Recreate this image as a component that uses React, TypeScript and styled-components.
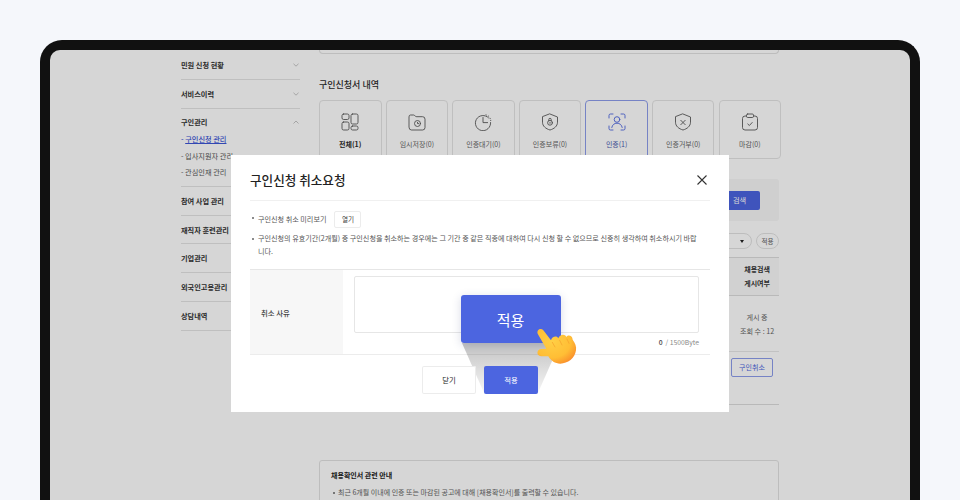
import styled, { createGlobalStyle } from "styled-components";
import type { ReactNode } from "react";

const GlobalStyle = createGlobalStyle`
  html, body {
    margin: 0;
    padding: 0;
    height: 500px;
    overflow: hidden;
    background: #f5f7fb;
    font-family: "Noto Sans CJK KR", "Noto Sans", sans-serif;
    color: #222;
  }
  * { box-sizing: border-box; }
`;

const Stage = styled.div`
  padding-top: 40px;
  height: 500px;
  overflow: hidden;
`;

const Device = styled.div`
  width: 880px;
  height: 480px;
  margin: 0 auto;
  border: 10px solid #111;
  border-bottom: 0;
  border-radius: 22px 22px 0 0;
  background: #111;
`;

const Screen = styled.div`
  position: relative;
  height: 470px;
  overflow: hidden;
  background: #fff;
  border-radius: 10px 10px 0 0;
`;

const Page = styled.div`
  width: 598px;
  margin: 0 auto;
  display: flex;
  gap: 19px;
  align-items: flex-start;
`;

const Sidebar = styled.nav`
  width: 119px;
  flex: none;
  padding-top: 1px;
`;

const MenuGroup = styled.div<{ $open?: boolean }>`
  border-bottom: 1px solid #e4e4e4;
  padding-bottom: ${(p) => (p.$open ? "5px" : "0")};
`;

const MenuTitle = styled.div`
  height: 27.8px;
  display: flex;
  align-items: center;
  justify-content: space-between;
  font-size: 7.2px;
  font-weight: 700;
  color: #333;
  padding-right: 1px;
`;

const SubList = styled.div`
  margin-top: -5px;
`;

const SubItem = styled.div<{ $active?: boolean }>`
  height: 16.5px;
  line-height: 16.5px;
  font-size: 7.2px;
  white-space: nowrap;
  color: ${(p) => (p.$active ? "#3c55d6" : "#555")};
  font-weight: ${(p) => (p.$active ? 500 : 400)};
  span {
    text-decoration: ${(p) => (p.$active ? "underline" : "none")};
  }
`;

const Main = styled.main`
  width: 460px;
  flex: none;
`;

const TopCard = styled.div`
  height: 4px;
  border: 1px solid #e2e2e2;
  border-top: 0;
  border-radius: 0 0 4px 4px;
`;

const SectionTitle = styled.h2`
  margin: 24px 0 8px;
  font-size: 9px;
  line-height: 14px;
  font-weight: 500;
  color: #2b2b2b;
`;

const TabGrid = styled.div`
  display: grid;
  grid-template-columns: repeat(7, 62.5px);
  gap: 4.1px;
`;

const Tab = styled.div<{ $active?: boolean }>`
  height: 59px;
  padding-top: 12px;
  display: flex;
  flex-direction: column;
  align-items: center;
  border: 1px solid ${(p) => (p.$active ? "#8d9ceb" : "#e4e4e4")};
  border-radius: 4px;
  color: ${(p) => (p.$active ? "#4c65e0" : "#5b5b5b")};
`;

const TabLabel = styled.div<{ $bold?: boolean; $active?: boolean }>`
  margin-top: 7px;
  font-size: 7px;
  line-height: 12px;
  font-weight: ${(p) => (p.$bold ? 700 : 400)};
  color: ${(p) => (p.$bold ? "#2b2b2b" : p.$active ? "#4a5bb0" : "#666")};
  white-space: nowrap;
`;

const SearchPanel = styled.div`
  margin-top: 20px;
  height: 42px;
  padding-right: 19px;
  display: flex;
  align-items: center;
  justify-content: flex-end;
  background: #f7f7f7;
  border-radius: 3px;
`;

const SearchButton = styled.div`
  width: 60px;
  height: 19px;
  padding-left: 33px;
  line-height: 19px;
  font-size: 7.2px;
  color: #fff;
  background: #4c65e0;
  border-radius: 2px;
`;

const FilterRow = styled.div`
  margin-top: 12px;
  height: 16px;
  display: flex;
  justify-content: flex-end;
  gap: 4px;
`;

const Pill = styled.div<{ $wide?: boolean }>`
  width: ${(p) => (p.$wide ? "60px" : "23px")};
  height: 16px;
  padding-right: ${(p) => (p.$wide ? "7px" : "0")};
  display: flex;
  align-items: center;
  justify-content: ${(p) => (p.$wide ? "flex-end" : "center")};
  border: 1px solid #e2e2e2;
  border-radius: 8px;
  font-size: 6.6px;
  color: #666;
`;

const Caret = styled.i`
  width: 0;
  height: 0;
  border-left: 2.5px solid transparent;
  border-right: 2.5px solid transparent;
  border-top: 3px solid #222;
`;

const TableHead = styled.div`
  margin-top: 8px;
  height: 39px;
  padding-right: 9px;
  display: flex;
  flex-direction: column;
  align-items: flex-end;
  justify-content: center;
  background: #fafafa;
  border-top: 1px solid #ddd;
  border-bottom: 1px solid #ddd;
  font-size: 7px;
  line-height: 13.4px;
  font-weight: 700;
  color: #333;
`;

const TableRow = styled.div`
  height: 56px;
  padding-top: 14px;
  border-bottom: 1px solid #e8e8e8;
`;

const CellLine = styled.div`
  width: 44px;
  margin-left: auto;
  font-size: 7.1px;
  line-height: 14px;
  text-align: center;
  white-space: nowrap;
  color: #666;
`;

const ActionRow = styled.div`
  height: 53px;
  padding: 6px 6px 0 0;
  display: flex;
  justify-content: flex-end;
  align-items: flex-start;
  border-bottom: 1px solid #ddd;
`;

const OutlineButton = styled.div`
  width: 42px;
  height: 19px;
  line-height: 17px;
  text-align: center;
  font-size: 7px;
  color: #4c65e0;
  border: 1px solid #8d9ceb;
  border-radius: 2px;
`;

const InfoBox = styled.div`
  margin-top: 55px;
  padding: 8px 11px 20px;
  border: 1px solid #e2e2e2;
  border-radius: 3px;
`;

const InfoTitle = styled.div`
  font-size: 7px;
  line-height: 13px;
  font-weight: 700;
  color: #222;
`;

const InfoLine = styled.div`
  margin-top: 4px;
  padding-left: 7px;
  font-size: 7px;
  line-height: 13px;
  color: #666;
  position: relative;
  &::before {
    content: "";
    position: absolute;
    left: 2px;
    top: 5.5px;
    width: 2px;
    height: 2px;
    border-radius: 50%;
    background: #666;
  }
`;

const Dim = styled.div`
  position: absolute;
  inset: 0;
  padding-top: 105px;
  display: flex;
  justify-content: center;
  align-items: flex-start;
  background: rgba(0, 0, 0, 0.16);
`;

const Modal = styled.section`
  position: relative;
  width: 498px;
  height: 257px;
  padding: 0 19px;
  background: #fff;
`;

const ModalHeader = styled.header`
  height: 46px;
  padding: 4px 2px 0 0;
  display: flex;
  align-items: center;
  justify-content: space-between;
  border-bottom: 1px solid #f0f0f0;
`;

const ModalTitle = styled.h1`
  margin: 0;
  font-size: 12.6px;
  font-weight: 500;
  color: #222;
`;

const NoteList = styled.ul`
  margin: 0;
  padding: 10px 0 0;
  height: 69px;
  list-style: none;
  border-bottom: 1px solid #e6e6e6;
`;

const NoteItem = styled.li`
  position: relative;
  padding: 0 12px 0 8px;
  font-size: 7.1px;
  line-height: 13px;
  color: #555;
  word-break: break-all;
  margin-bottom: 3px;
  &::before {
    content: "";
    position: absolute;
    left: 2px;
    top: 5.5px;
    width: 2px;
    height: 2px;
    border-radius: 50%;
    background: #666;
  }
`;

const PreviewRow = styled.div`
  display: flex;
  align-items: center;
  gap: 8px;
  height: 17px;
  margin-bottom: 4px;
`;

const SmallButton = styled.div`
  width: 27px;
  height: 17px;
  line-height: 15px;
  text-align: center;
  font-size: 6.6px;
  color: #444;
  border: 1px solid #ececec;
  border-radius: 2px;
`;

const FormRow = styled.div`
  height: 85px;
  display: flex;
  border-bottom: 1px solid #ececec;
`;

const FormLabel = styled.div`
  width: 93px;
  flex: none;
  padding-left: 11px;
  display: flex;
  align-items: center;
  background: #f7f7f7;
  font-size: 7.4px;
  font-weight: 500;
  color: #444;
`;

const FormField = styled.div`
  flex: 1;
  padding: 6px 11px 0;
`;

const ReasonInput = styled.textarea`
  display: block;
  width: 100%;
  height: 57px;
  resize: none;
  outline: none;
  border: 1px solid #e6e6e6;
  border-radius: 2px;
  background: #fff;
`;

const Counter = styled.div`
  margin-top: 4px;
  text-align: right;
  font-size: 6.8px;
  line-height: 10px;
  color: #888;
  b {
    color: #444;
    font-weight: 500;
    margin-right: 3px;
  }
`;

const ModalActions = styled.div`
  margin-top: 11px;
  display: flex;
  justify-content: center;
  gap: 8px;
`;

const ActionButton = styled.div<{ $primary?: boolean }>`
  position: relative;
  z-index: 1;
  width: 54px;
  height: 28px;
  line-height: 28px;
  text-align: center;
  font-size: 7.4px;
  border-radius: 2px;
  color: ${(p) => (p.$primary ? "#fff" : "#222")};
  background: ${(p) => (p.$primary ? "#4c65e0" : "#fff")};
  box-shadow: ${(p) => (p.$primary ? "none" : "inset 0 0 0 1px #ececec")};
`;

const Beam = styled.div`
  position: absolute;
  left: 231px;
  top: 188px;
  width: 98px;
  height: 51px;
  clip-path: polygon(0 0, 100% 0, 77% 100%, 23% 100%);
  background: linear-gradient(rgba(0, 0, 0, 0.24), rgba(0, 0, 0, 0.03));
`;

const BigButton = styled.div`
  position: absolute;
  left: 229.5px;
  top: 140px;
  width: 100px;
  height: 48px;
  display: flex;
  align-items: center;
  justify-content: center;
  font-size: 15px;
  color: #fff;
  background: #4c65e0;
  border-radius: 3px;
  box-shadow: 0 2px 10px rgba(40, 50, 110, 0.18);
`;

const HandWrap = styled.div`
  position: absolute;
  left: 294px;
  top: 160px;
  width: 65px;
  height: 60px;
`;

const CloseIcon = () => (
  <svg width="12" height="12" viewBox="0 0 12 12" fill="none" stroke="#333" strokeWidth="1.1">
    <path d="M1.5 1.5l9 9M10.5 1.5l-9 9" />
  </svg>
);

const Chevron = ({ up }: { up?: boolean }) => (
  <svg width="6" height="4" viewBox="0 0 6 4" fill="none" stroke="#b5b5b5" strokeWidth="0.8">
    <path d={up ? "M.5 3.5L3 1l2.5 2.5" : "M.5 .8L3 3.2 5.5 .8"} />
  </svg>
);

const TabIcon = ({ children }: { children: ReactNode }) => (
  <svg width="18" height="18" viewBox="0 0 18 18" fill="none" stroke="currentColor" strokeWidth="0.9" strokeLinecap="round" strokeLinejoin="round">
    {children}
  </svg>
);

const HandIcon = () => (
  <svg width="65" height="60" viewBox="0 0 195 180" fill="none">
    <defs>
      <radialGradient id="palm" cx="0.38" cy="0.35" r="0.8">
        <stop offset="0" stopColor="#ffcf45" />
        <stop offset="0.6" stopColor="#ffbe35" />
        <stop offset="0.86" stopColor="#fb962c" />
        <stop offset="1" stopColor="#f0713a" />
      </radialGradient>
    </defs>
    <path
      d="M38 56C34 44 48 38 55 46L78 76C80 64 96 60 100 70C104 58 120 56 124 66C130 58 142 62 143 74C150 84 155 94 153 106C150 130 128 146 106 146C90 146 78 138 70 124L48 124C34 122 34 104 48 102L64 101Z"
      fill="url(#palm)"
    />
    <path d="M82 82l8 14M104 76l7 14M126 72l6 13" stroke="#f6a62e" strokeWidth="2.5" strokeLinecap="round" />
  </svg>
);

const menuTop = ["민원 신청 현황", "서비스이력"];
const menuBottom = ["참여 사업 관리", "재직자 훈련관리", "기업관리", "외국인고용관리", "상담내역"];

const tabs: { label: string; bold?: boolean; active?: boolean; icon: ReactNode }[] = [
  {
    label: "전체(1)",
    bold: true,
    icon: (
      <>
        <rect x="1" y="1" width="7" height="5.5" rx="1.6" />
        <rect x="1" y="9" width="7" height="8" rx="1.6" />
        <rect x="10" y="1" width="7" height="10" rx="1.6" />
        <rect x="10" y="13" width="7" height="4" rx="1.6" />
      </>
    ),
  },
  {
    label: "임시저장(0)",
    icon: (
      <>
        <path d="M1 3.5A1.5 1.5 0 0 1 2.5 2h3.2c.7 0 1 .7 1.6 1.2.4.4 1 .5 1.6.5h5.6A2.5 2.5 0 0 1 17 6.2v8.3a2.5 2.5 0 0 1-2.5 2.5h-11A2.5 2.5 0 0 1 1 14.5z" />
        <circle cx="9.5" cy="10.5" r="3" />
        <path d="M9.5 9.3v1.3h1.2" />
      </>
    ),
  },
  {
    label: "인증대기(0)",
    icon: (
      <>
        <path d="M14.5 4.8A7.6 7.6 0 1 0 16.6 9.5" />
        <path d="M9 4.5V9.6h4.6" />
        <path d="M12 1.8l.4.2M14.4 3l.3.3M16 5.2l.2.4M16.7 7.3v.3" />
      </>
    ),
  },
  {
    label: "인증보류(0)",
    icon: (
      <>
        <path d="M9 1l7.5 3v5.2c0 4-3.4 6.6-7.5 7.8-4.100-1.200-7.500-3.800-7.500-7.800V4z" />
        <circle cx="9" cy="9.800" r="2.400" />
        <path d="M7.800 7.600V6.500a1.200 1.200 0 0 1 2.400 0v1.100" />
        <path d="M9 9.300v1" />
      </>
    ),
  },
  {
    label: "인증(1)",
    active: true,
    icon: (
      <>
        <path d="M1 5V2.500A1.500 1.500 0 0 1 2.500 1H5M13 1h2.500A1.500 1.500 0 0 1 17 2.500V5M17 13v2.500a1.500 1.500 0 0 1-1.500 1.500H13M5 17H2.500A1.500 1.500 0 0 1 1 15.500V13" />
        <circle cx="9" cy="6.500" r="2.800" />
        <path d="M3.800 14.500c.5-2.800 2.600-4.300 5.200-4.300s4.700 1.500 5.200 4.300" />
      </>
    ),
  },
  {
    label: "인증거부(0)",
    icon: (
      <>
        <path d="M9 1l7.500 3v5.200c0 4-3.400 6.600-7.500 7.800-4.100-1.200-7.500-3.800-7.500-7.800V4z" />
        <path d="M6.800 7.300l4.400 4.400M11.200 7.300l-4.400 4.400" />
      </>
    ),
  },
  {
    label: "마감(0)",
    icon: (
      <>
        <path d="M5.500 3H4a2.500 2.500 0 0 0-2.500 2.500v9A2.500 2.500 0 0 0 4 17h10a2.500 2.500 0 0 0 2.500-2.500v-9A2.500 2.500 0 0 0 14 3h-1.500" />
        <rect x="5.500" y="1" width="7" height="3.500" rx="1.200" />
        <path d="M6.800 11l1.600 1.500 2.800-3" />
      </>
    ),
  },
];

export default function App() {
  return (
    <>
      <GlobalStyle />
      <Stage>
        <Device>
          <Screen>
            <Page>
              <Sidebar>
                {menuTop.map((name) => (
                  <MenuGroup key={name}>
                    <MenuTitle>
                      {name}
                      <Chevron />
                    </MenuTitle>
                  </MenuGroup>
                ))}
                <MenuGroup $open>
                  <MenuTitle>
                    구인관리
                    <Chevron up />
                  </MenuTitle>
                  <SubList>
                    <SubItem $active>
                      - <span>구인신청 관리</span>
                    </SubItem>
                    <SubItem>- 입사지원자 관리</SubItem>
                    <SubItem>- 관심인재 관리</SubItem>
                  </SubList>
                </MenuGroup>
                {menuBottom.map((name) => (
                  <MenuGroup key={name}>
                    <MenuTitle>{name}</MenuTitle>
                  </MenuGroup>
                ))}
              </Sidebar>
              <Main>
                <TopCard />
                <SectionTitle>구인신청서 내역</SectionTitle>
                <TabGrid>
                  {tabs.map((tab) => (
                    <Tab key={tab.label} $active={tab.active}>
                      <TabIcon>{tab.icon}</TabIcon>
                      <TabLabel $bold={tab.bold} $active={tab.active}>
                        {tab.label}
                      </TabLabel>
                    </Tab>
                  ))}
                </TabGrid>
                <SearchPanel>
                  <SearchButton>검색</SearchButton>
                </SearchPanel>
                <FilterRow>
                  <Pill $wide>
                    <Caret />
                  </Pill>
                  <Pill>적용</Pill>
                </FilterRow>
                <TableHead>
                  <div>채용검색</div>
                  <div>게시여부</div>
                </TableHead>
                <TableRow>
                  <CellLine>게시 중</CellLine>
                  <CellLine>조회 수 : 12</CellLine>
                </TableRow>
                <ActionRow>
                  <OutlineButton>구인취소</OutlineButton>
                </ActionRow>
                <InfoBox>
                  <InfoTitle>채용확인서 관련 안내</InfoTitle>
                  <InfoLine>최근 6개월 이내에 인증 또는 마감된 공고에 대해 [채용확인서]를 출력할 수 있습니다.</InfoLine>
                </InfoBox>
              </Main>
            </Page>
            <Dim>
              <Modal>
                <ModalHeader>
                  <ModalTitle>구인신청 취소요청</ModalTitle>
                  <CloseIcon />
                </ModalHeader>
                <NoteList>
                  <NoteItem>
                    <PreviewRow>
                      구인신청 취소 미리보기
                      <SmallButton>열기</SmallButton>
                    </PreviewRow>
                  </NoteItem>
                  <NoteItem>
                    구인신청의 유효기간(2개월) 중 구인신청을 취소하는 경우에는 그 기간 중 같은 직종에 대하여 다시 신청 할 수 없으므로 신중히 생각하여 취소하시기 바랍니다.
                  </NoteItem>
                </NoteList>
                <FormRow>
                  <FormLabel>취소 사유</FormLabel>
                  <FormField>
                    <ReasonInput />
                    <Counter>
                      <b>0</b>/ 1500Byte
                    </Counter>
                  </FormField>
                </FormRow>
                <ModalActions>
                  <ActionButton>닫기</ActionButton>
                  <ActionButton $primary>적용</ActionButton>
                </ModalActions>
                <Beam />
                <BigButton>적용</BigButton>
                <HandWrap>
                  <HandIcon />
                </HandWrap>
              </Modal>
            </Dim>
          </Screen>
        </Device>
      </Stage>
    </>
  );
}
